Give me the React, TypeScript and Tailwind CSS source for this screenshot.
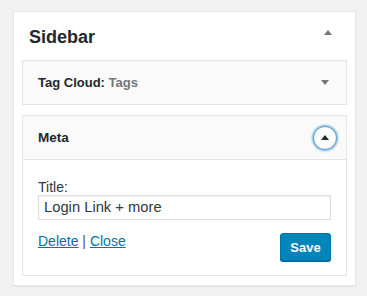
export default function App() {
  return (
    <div className="w-[367px] h-[296px] bg-[#f1f1f1] pt-[11px] pl-[13px] font-['Liberation_Sans',Arial,sans-serif]">
      <div className="w-[343px] border border-[#e5e5e5] bg-white shadow-[0_1px_1px_rgba(0,0,0,0.04)]">
        <div className="flex items-start justify-between h-[48px]">
          <h2 className="pt-[15px] pl-[15px] text-[18px] leading-[20px] font-bold text-[#23282d]">Sidebar</h2>
          <span className="mt-[18px] mr-[23px] w-0 h-0 border-x-[4px] border-x-transparent border-b-[5px] border-b-[#72777c]" />
        </div>
        <div className="flex flex-col gap-[10px] px-[8px] pb-[9px]">
          <div className="border border-[#e5e5e5] bg-[#fafafa]">
            <div className="flex items-center justify-between h-[43px] pl-[15px] pr-[17px]">
              <h3 className="text-[13px] leading-[16px] font-bold text-[#23282d]">
                Tag Cloud: <span className="text-[#72777c]">Tags</span>
              </h3>
              <span className="w-0 h-0 border-x-[4px] border-x-transparent border-t-[5px] border-t-[#72777c]" />
            </div>
          </div>
          <div className="border border-[#e5e5e5] bg-white">
            <div className="flex items-center justify-between h-[43px] pl-[15px] pr-[9px] bg-[#fafafa] border-b border-[#e5e5e5] box-content">
              <h3 className="text-[13.5px] leading-[16px] font-bold text-[#23282d]">Meta</h3>
              <span className="flex items-center justify-center w-[24px] h-[24px] rounded-full border border-[#5b9dd9] bg-white shadow-[0_0_2px_1px_rgba(30,140,190,0.6)]">
                <span className="w-0 h-0 border-x-[4px] border-x-transparent border-b-[5px] border-b-[#23282d] -mt-[1px]" />
              </span>
            </div>
            <div className="px-[15px] pt-[19px] pb-[14px]">
              <label className="block text-[14px] leading-[16px] text-[#32373c]">Title:</label>
              <div className="h-[25px] w-full border border-[#ddd] bg-white shadow-[inset_0_1px_2px_rgba(0,0,0,0.07)] pl-[5px] flex items-center text-[14.75px] text-[#32373c]">
                Login Link + more
              </div>
              <div className="mt-[13px] flex items-start justify-between">
                <div className="text-[14px] leading-[16px] text-[#555]">
                  <a className="text-[#0073aa] underline">Delete</a> | <a className="text-[#0073aa] underline">Close</a>
                </div>
                <button className="h-[28px] w-[51px] rounded-[3px] border border-[#0073aa] bg-[#0085ba] shadow-[0_1px_0_#006799] text-white text-[13px] font-bold leading-none">
                  Save
                </button>
              </div>
            </div>
          </div>
        </div>
      </div>
    </div>
  );
}
